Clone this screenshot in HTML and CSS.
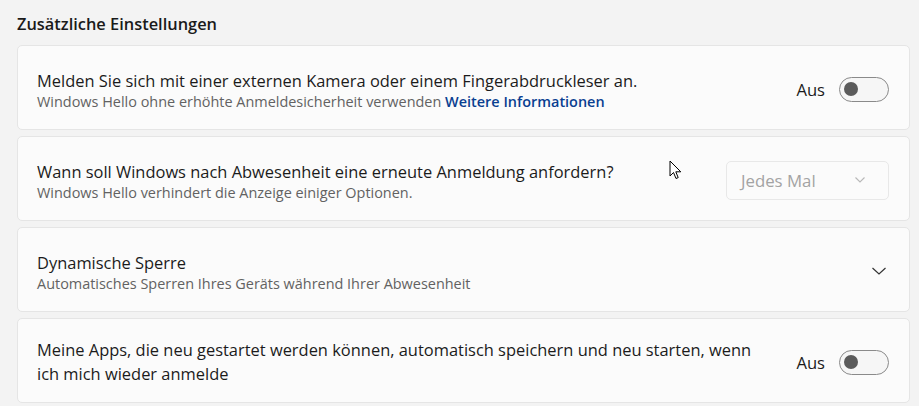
FILE: index.html
```html
<!DOCTYPE html>
<html lang="de">
<head>
<meta charset="utf-8">
<link rel="stylesheet" href="styles.css">
</head>
<body>
<div class="page">
  <h2 class="heading">Zusätzliche Einstellungen</h2>
  <div class="list">
    <div class="card">
      <div class="texts two">
        <div class="title">Melden Sie sich mit einer externen Kamera oder einem Fingerabdruckleser an.</div>
        <div class="sub">Windows Hello ohne erhöhte Anmeldesicherheit verwenden <a class="link">Weitere Informationen</a></div>
      </div>
      <div class="control">
        <span class="state">Aus</span>
        <span class="toggle"><span class="knob"></span></span>
      </div>
    </div>
    <div class="card">
      <div class="texts two">
        <div class="title">Wann soll Windows nach Abwesenheit eine erneute Anmeldung anfordern?</div>
        <div class="sub">Windows Hello verhindert die Anzeige einiger Optionen.</div>
      </div>
      <div class="control">
        <div class="dropdown">
          <span>Jedes Mal</span>
          <svg class="dd-chev" width="12" height="8" viewBox="0 0 12 8"><path d="M1.5 1.5 L6 6 L10.5 1.5" fill="none" stroke="#b8b8b8" stroke-width="1.1"/></svg>
        </div>
      </div>
    </div>
    <div class="card">
      <div class="texts two">
        <div class="title">Dynamische Sperre</div>
        <div class="sub">Automatisches Sperren Ihres Geräts während Ihrer Abwesenheit</div>
      </div>
      <div class="control">
        <svg class="chev" width="16" height="10" viewBox="0 0 16 10"><path d="M1.5 2 L8 8 L14.5 2" fill="none" stroke="#333" stroke-width="1.2"/></svg>
      </div>
    </div>
    <div class="card">
      <div class="texts">
        <div class="title wrap">Meine Apps, die neu gestartet werden können, automatisch speichern und neu starten, wenn ich mich wieder anmelde</div>
      </div>
      <div class="control">
        <span class="state">Aus</span>
        <span class="toggle"><span class="knob"></span></span>
      </div>
    </div>
  </div>
  <svg class="cursor" width="14" height="21" viewBox="0 0 14 21"><path d="M1 1 L1 16 L4.5 12.5 L7 18.5 L9.2 17.6 L6.8 11.8 L11.8 11.8 Z" fill="#fff" stroke="#000" stroke-width="1" stroke-linejoin="round"/></svg>
</div>
</body>
</html>
```
FILE: styles.css
```css
* { box-sizing: border-box; }
html, body { margin: 0; padding: 0; }
body {
  background: #f3f3f3;
  font-family: "Open Sans", "Noto Sans", sans-serif;
  color: #1b1b1b;
  width: 919px;
  height: 406px;
  overflow: hidden;
}
.page {
  position: relative;
  padding: 0 9px 0 17px;
}
.heading {
  margin: 0;
  padding-top: 12px;
  height: 45px;
  font-size: 16.4px;
  line-height: 24px;
  font-weight: 600;
  color: #1a1a1a;
}
.list {
  display: flex;
  flex-direction: column;
  gap: 6px;
}
.card {
  height: 85px;
  background: #fbfbfb;
  border: 1px solid #e5e5e5;
  border-radius: 5px;
  display: flex;
  align-items: center;
  padding: 3px 20px 0 19px;
}
.texts { flex: 1; }
.texts.two { padding-top: 4px; }
.title {
  font-size: 16.45px;
  line-height: 22px;
  color: #1b1b1b;
}
.title.wrap { max-width: 735px; line-height: 24px; }
.sub {
  font-size: 14.45px;
  line-height: 20px;
  color: #626262;
}
.link {
  color: #0a3f91;
  font-weight: 600;
}
.control {
  display: flex;
  align-items: center;
}
.state {
  font-size: 16.6px;
  margin-right: 14px;
  color: #1b1b1b;
}
.toggle {
  width: 50px;
  height: 25px;
  border: 1px solid #8a8a8a;
  border-radius: 13px;
  background: #f6f6f6;
  display: flex;
  align-items: center;
  padding-left: 4px;
}
.knob {
  width: 14px;
  height: 14px;
  border-radius: 50%;
  background: #5b5b5b;
}
.dropdown {
  width: 163px;
  height: 39px;
  border: 1px solid #e8e8e8;
  border-radius: 5px;
  background: #fbfbfb;
  display: flex;
  align-items: center;
  justify-content: space-between;
  padding: 0 22px 0 14px;
  font-size: 16.8px;
  color: #a3a3a3;
}
.chev { margin-right: 2px; }
.cursor {
  position: absolute;
  left: 669px;
  top: 160px;
}
```
